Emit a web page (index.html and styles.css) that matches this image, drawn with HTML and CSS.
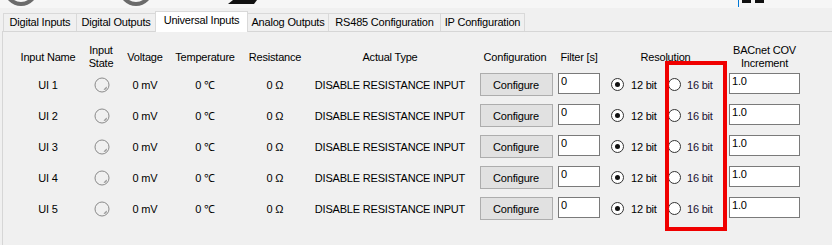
FILE: index.html
```html
<!DOCTYPE html>
<html lang="en">
<head>
  <meta charset="UTF-8">
  <title>Universal Inputs</title>
  <link rel="stylesheet" href="styles.css">
</head>
<body>

  <div class="toolbar">
    <svg width="832" height="8" viewBox="0 0 832 8">
      <circle cx="21" cy="-11" r="15" fill="none" stroke="#6b6b6b" stroke-width="4"/>
      <circle cx="136" cy="-11" r="15" fill="none" stroke="#6b6b6b" stroke-width="4"/>
      <path d="M233 0 H257 L254 4 H228 Z" fill="#111"/>
      <rect x="738" y="0" width="1" height="7" fill="#0078d7"/>
      <rect x="742" y="0" width="9" height="3" fill="#111"/>
      <rect x="755" y="0" width="9" height="3" fill="#111"/>
    </svg>
  </div>

  <div class="tabs">
    <div class="tab w-di">Digital Inputs</div>
    <div class="tab w-do">Digital Outputs</div>
    <div class="tab active w-ui">Universal Inputs</div>
    <div class="tab w-ao">Analog Outputs</div>
    <div class="tab w-rs">RS485 Configuration</div>
    <div class="tab w-ip">IP Configuration</div>
  </div>

  <div class="panel">
    <div class="grid head">
      <div>Input Name</div>
      <div>Input<br>State</div>
      <div>Voltage</div>
      <div>Temperature</div>
      <div>Resistance</div>
      <div>Actual Type</div>
      <div>Configuration</div>
      <div>Filter [s]</div>
      <div class="span2">Resolution</div>
      <div>BACnet COV<br>Increment</div>
    </div>
    <div id="rows"></div>
  </div>

  <div class="highlight"></div>

  <script>
    const rows = document.querySelector('#rows');
    const led = '<svg width="16" height="16" viewBox="0 0 16 16">' +
      '<circle cx="8" cy="8" r="7" fill="#f0f0f0" stroke="#8a8a8a" stroke-width="1"/>' +
      '<path d="M9.5 12.5 L12.5 9.5 L13 11 L11 13 Z" fill="#9a9a9a"/></svg>';

    for (let i = 1; i <= 5; i++) {
      const row = document.createElement('div');
      row.className = 'grid row';
      row.innerHTML =
        '<div>UI ' + i + '</div>' +
        '<div class="led">' + led + '</div>' +
        '<div>0 mV</div>' +
        '<div>0 \u2103</div>' +
        '<div>0 \u03A9</div>' +
        '<div>DISABLE RESISTANCE INPUT</div>' +
        '<div><button type="button" class="btn">Configure</button></div>' +
        '<div><input type="text" class="box filter" value="0"></div>' +
        '<label class="radio"><span class="dot checked"></span>12 bit</label>' +
        '<label class="radio r16"><span class="dot"></span>16 bit</label>' +
        '<div class="left"><input type="text" class="box cov" value="1.0"></div>';
      rows.appendChild(row);
    }
  </script>
</body>
</html>
```

FILE: styles.css
```css
* {
  box-sizing: border-box;
}

body {
  margin: 0;
  height: 245px;
  overflow: hidden;
  background-color: #f0f0f0;
  font-family: 'Liberation Sans', Arial, sans-serif;
  font-size: 11px;
  letter-spacing: -0.2px;
  color: #000;
  position: relative;
}

.toolbar {
  height: 8px;
  background-color: #f6f6f6;
}

.toolbar svg {
  display: block;
}

.tabs {
  display: flex;
  align-items: flex-end;
  height: 23px;
  padding-left: 3px;
}

.tab {
  height: 18px;
  line-height: 16px;
  text-align: center;
  border: 1px solid #d9d9d9;
  border-bottom: none;
  margin-left: -1px;
  background-color: #f0f0f0;
  white-space: nowrap;
}

.tab:first-child {
  margin-left: 0;
}

.tab.active {
  height: 21px;
  line-height: 16px;
  margin-bottom: -1px;
  background-color: #fff;
  position: relative;
  z-index: 1;
}

.w-di { width: 74px; }
.w-do { width: 80px; }
.w-ui { width: 93px; }
.w-ao { width: 82px; }
.w-rs { width: 113px; }
.w-ip { width: 85px; }

.panel {
  margin-left: 2px;
  height: 220px;
  border-top: 1px solid #d6d6d6;
  border-left: 1px solid #d6d6d6;
  padding: 12px 0 0 17px;
}

.grid {
  display: grid;
  grid-template-columns: 56px 50px 38px 82px 58px 172px 78px 50px 58px 65px 75px;
  align-items: center;
  text-align: center;
}

.head {
  height: 25px;
  line-height: 13px;
}

.head .span2 {
  grid-column: span 2;
}

.row {
  height: 31px;
}

.led svg {
  display: block;
  margin: 0 auto;
  position: relative;
  left: 1px;
}

.btn {
  width: 73px;
  height: 23px;
  font-family: inherit;
  font-size: 11px;
  letter-spacing: -0.2px;
  background-color: #e1e1e1;
  border: 1px solid #adadad;
  padding: 0;
  color: #000;
  margin-left: 2px;
}

.box {
  display: block;
  height: 21px;
  border: 1px solid #7a7a7a;
  background-color: #fff;
  font-family: inherit;
  font-size: 11px;
  letter-spacing: -0.2px;
  padding: 0 0 4px 2px;
  margin-bottom: 3px;
  color: #000;
}

.filter {
  width: 42px;
  margin-left: 4px;
}

.left {
  text-align: left;
}

.cov {
  width: 71px;
  margin-left: 2px;
}

.radio {
  display: flex;
  align-items: center;
  gap: 7px;
  padding-left: 7px;
  text-align: left;
  white-space: nowrap;
}

.radio.r16 {
  padding-left: 6px;
  gap: 6px;
  color: #1a1030;
}

.dot {
  width: 13px;
  height: 13px;
  border: 1px solid #333;
  border-radius: 50%;
  background-color: #fff;
  position: relative;
}

.dot.checked::after {
  content: '';
  position: absolute;
  left: 3px;
  top: 3px;
  width: 5px;
  height: 5px;
  border-radius: 50%;
  background-color: #111;
}

.highlight {
  position: absolute;
  left: 665px;
  top: 61px;
  width: 62px;
  height: 170px;
  border: 4px solid #f00000;
}
```
